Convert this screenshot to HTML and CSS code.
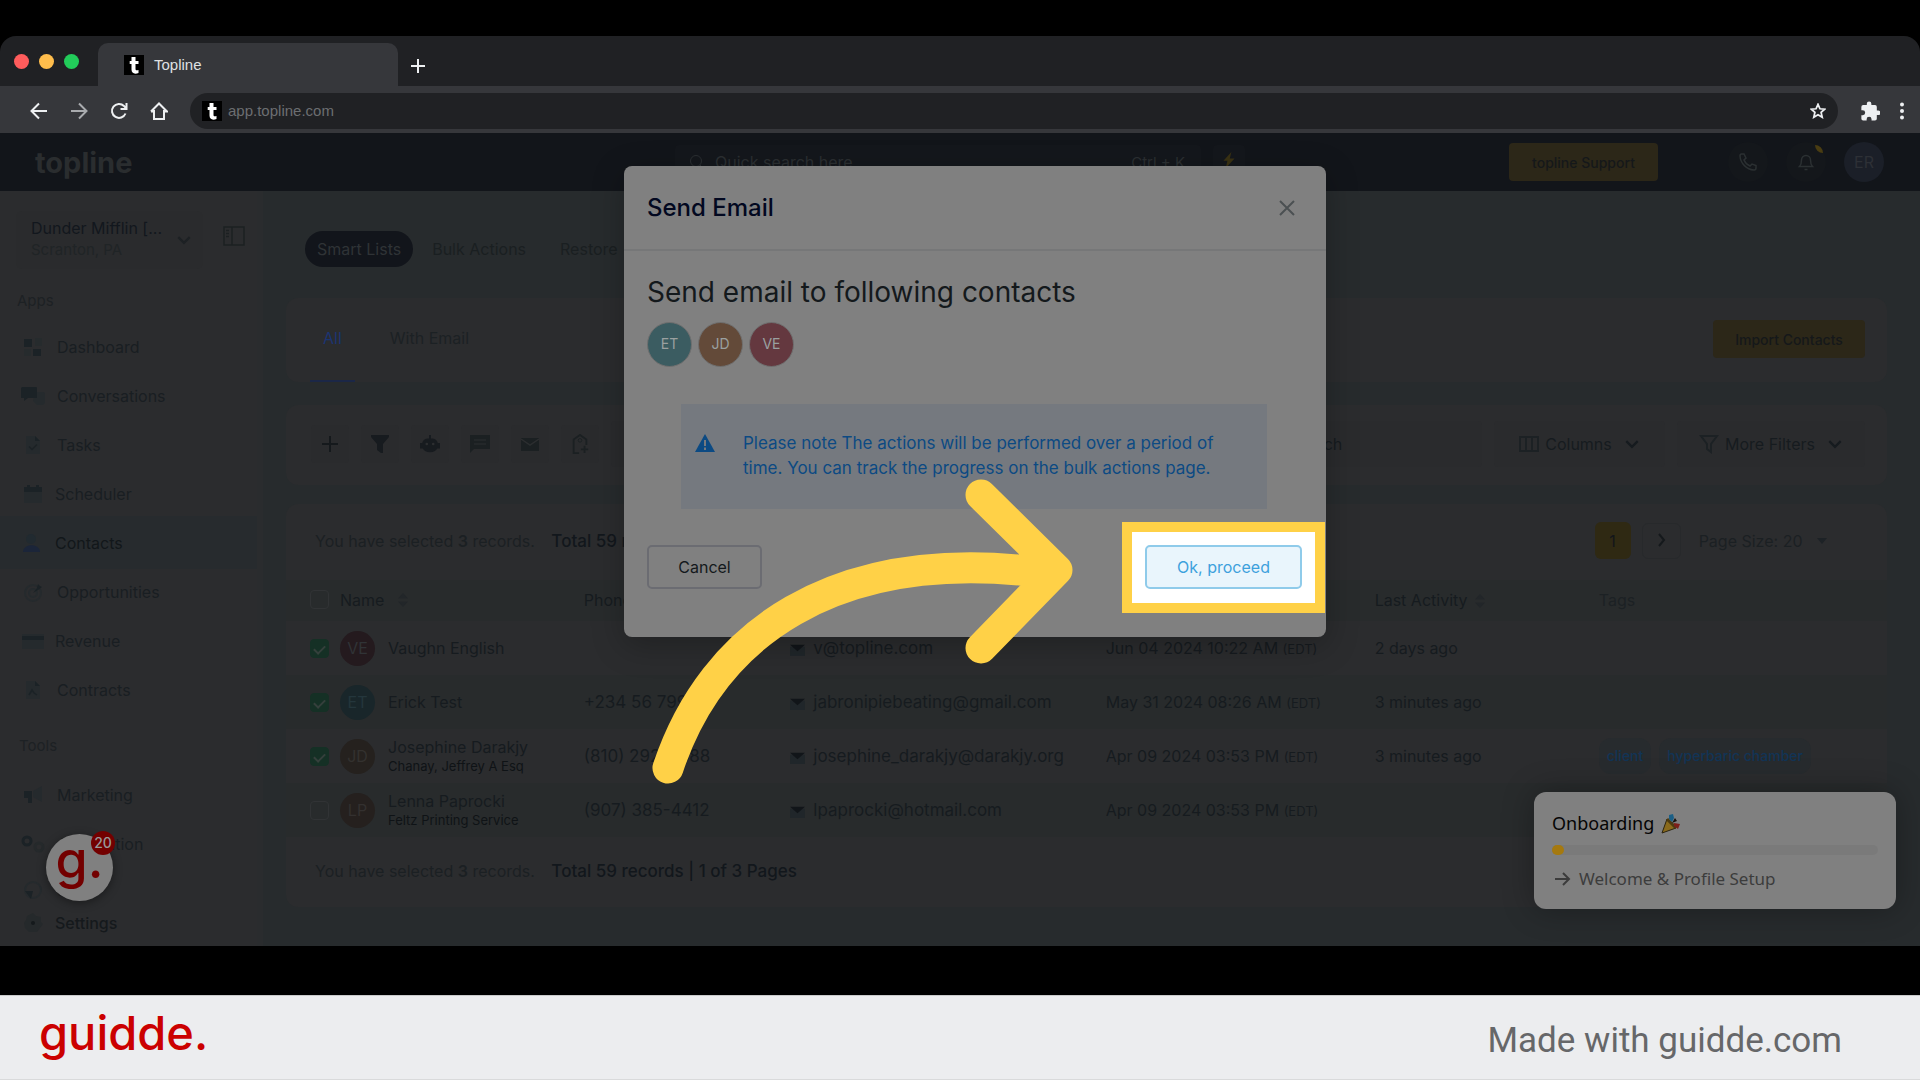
FILE: index.html
```html
<!DOCTYPE html>
<html lang="en">
<head>
  <meta charset="UTF-8">
  <meta name="viewport" content="width=device-width, initial-scale=1.0">
  <title>Topline</title>
  <link rel="stylesheet" href="styles.css">
</head>
<body>

  <!-- Shared icons -->
  <svg class="sprite" aria-hidden="true">
    <symbol id="i-sort" viewBox="0 0 12 16"><path d="M1 6.500 6 1l5 5.500zM1 9.500 6 15l5-5.500z" fill="currentColor"/></symbol>
    <symbol id="i-mail" viewBox="0 0 16 14"><path d="M0 4h16v10H0z" fill="#20262a"/><path d="M0 2h16L8 9z" fill="#111519"/></symbol>
    <symbol id="i-chevron" viewBox="0 0 14 14"><path d="M2 4.500l5 5 5-5" fill="none" stroke="currentColor" stroke-width="2"/></symbol>
    <symbol id="i-file" viewBox="0 0 20 20"><path d="M3 1h9l5 5v13H3z" fill="#252a2d"/><path d="M12 1l5 5h-5z" fill="#1b2226"/></symbol>
    <symbol id="i-favicon" viewBox="0 0 20 20"><path d="M0 0h20v20H0z" fill="#000"/><path d="M7.500 2h4v4h3v3h-3v5c0 1.400 1 1.700 3 1v3c-4 1.500-7 .3-7-3.400V9H5.700V6h1.800z" fill="#fff"/></symbol>
  </svg>

  <div class="browser">
    <div class="tab-strip">
      <div class="lights"><span class="light red"></span><span class="light amber"></span><span class="light green"></span></div>
      <div class="tab">
        <svg class="favicon"><use href="#i-favicon"/></svg>
        <span>Topline</span>
      </div>
      <button class="chrome-btn new-tab" aria-label="New tab"><svg viewBox="0 0 16 16"><path d="M8 1v14M1 8h14"/></svg></button>
    </div>

    <div class="address-row">
      <button class="chrome-btn" aria-label="Back"><svg viewBox="0 0 18 18"><path d="M17 9H2M9 1.500 1.500 9 9 16.500"/></svg></button>
      <button class="chrome-btn dim" aria-label="Forward"><svg viewBox="0 0 18 18"><path d="M1 9h15M9 1.500 16.500 9 9 16.500"/></svg></button>
      <button class="chrome-btn" aria-label="Reload"><svg viewBox="0 0 18 18"><path d="M15.500 11.500A7 7 0 1 1 14 4l2 2.500M16.500 1v6h-6"/></svg></button>
      <button class="chrome-btn" aria-label="Home"><svg viewBox="0 0 18 18"><path d="M4 8v9h10V8M1 9.500 9 1.500l8 8h-3M1 9.500h3"/></svg></button>
      <div class="address">
        <svg class="favicon"><use href="#i-favicon"/></svg>
        <input type="text" aria-label="Address" value="app.topline.com">
        <button class="chrome-btn small" aria-label="Bookmark"><svg viewBox="0 0 18 18"><path d="M9 1.500l2.200 5 5.300.5-4 3.600 1.200 5.400L9 13.200 4.300 16l1.200-5.400-4-3.600 5.300-.5z"/></svg></button>
      </div>
      <button class="chrome-btn puzzle" aria-label="Extensions"><svg viewBox="0 0 22 22"><path d="M20 10.500h-1.500v-4a2 2 0 0 0-2-2h-4V3a2.500 2.500 0 0 0-5 0v1.500h-4a2 2 0 0 0-2 2v3.800H3a2.700 2.700 0 0 1 0 5.400H1.500v3.800a2 2 0 0 0 2 2h3.800V20a2.700 2.700 0 0 1 5.400 0v1.500h3.800a2 2 0 0 0 2-2v-4H20a2.500 2.500 0 0 0 0-5z"/></svg></button>
      <button class="chrome-btn dots" aria-label="Menu"><svg viewBox="0 0 6 18"><circle cx="3" cy="2.500" r="2"/><circle cx="3" cy="9" r="2"/><circle cx="3" cy="15.500" r="2"/></svg></button>
    </div>

    <div class="app">
      <header class="topbar">
        <a class="brand" href="#">topline</a>
        <div class="quick">
          <svg viewBox="0 0 16 16" class="icon16"><circle cx="7" cy="7" r="5.500" fill="none" stroke="currentColor"/><path d="M11 11l4 4" stroke="currentColor"/></svg>
          <input type="text" aria-label="Quick search" placeholder="Quick search here">
          <span>Ctrl + K</span>
        </div>
        <button class="bolt" aria-label="Shortcuts"><svg viewBox="0 0 16 20" class="icon16"><path d="M11 0 1 11h5l-2 9 11-12H9z" fill="#3a3213"/></svg></button>
        <div class="top-actions">
          <button class="gold-btn support">topline Support</button>
          <button class="round" aria-label="Call"><svg viewBox="0 0 20 20" class="icon20"><path d="M6 2H3.500C2 2 2 3.500 2 4c.5 7.500 6.500 13.500 14 14 1 0 2-.5 2-2v-2.500l-4-1.500-2 2c-2.500-1-5-3.500-6-6l2-2z" fill="none" stroke="#2b3032" stroke-width="1.500"/></svg></button>
          <button class="round bell" aria-label="Notifications"><svg viewBox="0 0 20 20" class="icon20"><path d="M3.500 14.500c2-2 2-4 2-6.500a4.500 4.500 0 0 1 9 0c0 2.500 0 4.500 2 6.500zM8.500 17.500h3" fill="none" stroke="#2b3032" stroke-width="1.500"/></svg></button>
          <button class="round user">ER</button>
        </div>
      </header>

      <div class="body">
        <aside class="sidebar">
          <div class="account">
            <button class="account-box">
              <span class="account-text"><b>Dunder Mifflin [...</b><small>Scranton, PA</small></span>
              <svg class="icon16"><use href="#i-chevron"/></svg>
            </button>
            <button class="panel" aria-label="Collapse sidebar"><svg viewBox="0 0 22 20"><path d="M1 1h20v18H1zM9 1v18M3 4.500h3M3 7.500h3M3 10.500h3" fill="none" stroke="#1c2022" stroke-width="1.500"/></svg></button>
          </div>
          <h6>Apps</h6>
          <nav>
            <a href="#"><svg viewBox="0 0 20 20"><path d="M1 2h8v8H1zM10 12h8v7h-8z" fill="#1b2226"/><path d="M12 1h7v8h-7zM1 12h7v7H1z" fill="#262b2d"/></svg>Dashboard</a>
            <a href="#"><svg viewBox="0 0 24 20" class="wide"><path d="M14 6h8q2 0 2 2v9l-2 2h-6l-4-4z" fill="#252a2d"/><path d="M1 1h14q1 0 1 1v10H7l-4 3v-3H0V2z" fill="#1b2226"/></svg>Conversations</a>
            <a href="#"><svg viewBox="0 0 20 20"><use href="#i-file"/><path d="M6 11.500l3 3 5-5" fill="none" stroke="#1b2226" stroke-width="1.500"/></svg>Tasks</a>
            <a href="#" class="tight"><svg viewBox="0 0 20 20"><path d="M1 8h18v11H1z" fill="#252a2d"/><path d="M1 3h3V1h3v2h6V1h3v2h3v5H1z" fill="#1b2226"/></svg>Scheduler</a>
            <a href="#" class="tight active"><svg viewBox="0 0 20 20"><circle cx="8" cy="6" r="5" fill="#212a30"/><path d="M0 19c0-9 17-9 17 0z" fill="#1b2539"/></svg>Contacts</a>
            <a href="#"><svg viewBox="0 0 20 20"><circle cx="10" cy="11" r="8" fill="none" stroke="#252a2d" stroke-width="2"/><circle cx="10" cy="11" r="4" fill="none" stroke="#252a2d" stroke-width="2"/><path d="M10 11l4-5 1-4 2 2 2 1-4 3z" fill="#1b2226"/></svg>Opportunities</a>
            <a href="#" class="tight"><svg viewBox="0 0 22 20" class="wide"><path d="M0 3h22v15H0z" fill="#252a2d"/><path d="M0 5h22v4H0z" fill="#1b2226"/></svg>Revenue</a>
            <a href="#"><svg viewBox="0 0 20 20"><use href="#i-file"/><path d="M6 15l3-5 2 3 3 2" fill="none" stroke="#1b2226" stroke-width="1.500"/></svg>Contracts</a>
          </nav>
          <h6 class="tools">Tools</h6>
          <nav>
            <a href="#"><svg viewBox="0 0 20 20"><path d="M10 6l9-5v16l-9-5z" fill="#252a2d"/><path d="M1 6h8v12H5v-5H1z" fill="#1b2226"/></svg>Marketing</a>
            <a href="#"><svg viewBox="0 0 24 20" class="wide"><circle cx="6" cy="7" r="4" fill="none" stroke="#1b2226" stroke-width="3" /><circle cx="18" cy="13" r="4" fill="none" stroke="#25292b" stroke-width="3"/></svg>Automation</a>
            <a href="#" class="cut"><svg viewBox="0 0 20 20"><circle cx="10" cy="10" r="8" fill="none" stroke="#252a2d" stroke-width="2"/><path d="M2 11l8 0-2 8z" fill="#1b2226"/></svg>Sites</a>
          </nav>
          <a href="#" class="settings tight"><svg viewBox="0 0 20 20"><path d="M10 0l3 3 5 1 0 5 2 2-3 4-3 4-4 0-4 0-4-4-1-5 2-3 1-4z" fill="#25292b"/><circle cx="10" cy="10" r="2" fill="#15191c"/></svg>Settings</a>
        </aside>

        <main>
          <div class="pills">
            <a href="#" class="on">Smart Lists</a>
            <a href="#">Bulk Actions</a>
            <a href="#">Restore</a>
          </div>

          <section class="card lists">
            <a href="#" class="on">All</a>
            <a href="#">With Email</a>
            <button class="gold-btn">Import Contacts</button>
          </section>

          <section class="card tools-row">
            <button aria-label="Add"><svg viewBox="0 0 20 20"><path d="M10 2v16M2 10h16" stroke="#15191c" stroke-width="2"/></svg></button>
            <button aria-label="Pipeline"><svg viewBox="0 0 20 20"><path d="M1 1h18v2l-6 7v9h-2l-4-3v-6L1 3z" fill="#171b1f"/></svg></button>
            <button aria-label="Automation"><svg viewBox="0 0 22 20"><path d="M10 0h2v4c5 0 7 2 7.500 5H22v6h-3q-2 4-8 4t-8-4H0V9h2.500C3 6 5 4 10 4z" fill="#171b1f"/><circle cx="7.500" cy="10" r="1.500" fill="#2c2e30"/><circle cx="14.500" cy="10" r="1.500" fill="#2c2e30"/></svg></button>
            <button aria-label="Send SMS"><svg viewBox="0 0 20 20"><path d="M0 1h20v14H4l-4 4z" fill="#1b2022"/><path d="M4 6h12M4 10h12" stroke="#2c2e30"/></svg></button>
            <button aria-label="Send email"><svg viewBox="0 0 20 20"><path d="M1 4h18v13H1z" fill="#1b2022"/><path d="M1 5l9 6 9-6" fill="none" stroke="#2c2e30" stroke-width="1.500"/></svg></button>
            <button aria-label="Add tag"><svg viewBox="0 0 20 22"><path d="M9 21H3V6l7-5 7 5v6M15 13v8M11 17h8" fill="none" stroke="#1b2022" stroke-width="2"/><circle cx="10" cy="7" r="2" fill="none" stroke="#1b2022"/></svg></button>
            <input type="text" class="search" aria-label="Search contacts" placeholder="Quick search">
            <button class="wide-btn columns"><svg viewBox="0 0 20 16"><path d="M1 1h18v14H1zM7 1v14M13 1v14" fill="none" stroke="#1c2124" stroke-width="2"/></svg>Columns<svg><use href="#i-chevron"/></svg></button>
            <button class="wide-btn filters"><svg viewBox="0 0 20 18"><path d="M2 1h16l-6 8v8l-4-3V9z" fill="none" stroke="#1c2124" stroke-width="2"/></svg>More Filters<svg><use href="#i-chevron"/></svg></button>
          </section>

          <section class="card records">
            <div class="bar">
              <p>You have selected <b>3</b> records. <strong>Total 59 records | 1 of 3 Pages</strong></p>
              <div class="pager">
                <button class="page">1</button>
                <button class="next" aria-label="Next page"><svg viewBox="0 0 10 14"><path d="M3 1l5 6-5 6" fill="none" stroke="#15191c" stroke-width="2"/></svg></button>
                <button class="size">Page Size: 20 <svg viewBox="0 0 10 6"><path d="M0 0h10L5 6z" fill="#1d2226"/></svg></button>
              </div>
            </div>

            <table>
              <colgroup><col class="c-name"><col class="c-phone"><col class="c-email"><col class="c-date"><col class="c-last"><col></colgroup>
              <thead>
                <tr>
                  <th><div class="person"><input type="checkbox" aria-label="Select all"><span>Name</span><svg class="sort"><use href="#i-sort"/></svg></div></th>
                  <th>Phone</th>
                  <th>Email</th>
                  <th>Created</th>
                  <th>Last Activity <svg class="sort"><use href="#i-sort"/></svg></th>
                  <th class="faint">Tags</th>
                </tr>
              </thead>
              <tbody>
                <tr>
                  <td><div class="person"><input type="checkbox" aria-label="Select Vaughn English" checked><i class="ava ve">VE</i><span>Vaughn English</span></div></td>
                  <td></td>
                  <td><svg class="mail"><use href="#i-mail"/></svg>v@topline.com</td>
                  <td>Jun 04 2024 10:22 AM <small>(EDT)</small></td>
                  <td>2 days ago</td>
                  <td></td>
                </tr>
                <tr>
                  <td><div class="person"><input type="checkbox" aria-label="Select Erick Test" checked><i class="ava et">ET</i><span>Erick Test</span></div></td>
                  <td>+234 56 7999</td>
                  <td><svg class="mail"><use href="#i-mail"/></svg>jabronipiebeating@gmail.com</td>
                  <td>May 31 2024 08:26 AM <small>(EDT)</small></td>
                  <td>3 minutes ago</td>
                  <td></td>
                </tr>
                <tr>
                  <td><div class="person"><input type="checkbox" aria-label="Select Josephine Darakjy" checked><i class="ava jd">JD</i><span>Josephine Darakjy<em>Chanay, Jeffrey A Esq</em></span></div></td>
                  <td>(810) 292-9388</td>
                  <td><svg class="mail"><use href="#i-mail"/></svg>josephine_darakjy@darakjy.org</td>
                  <td>Apr 09 2024 03:53 PM <small>(EDT)</small></td>
                  <td>3 minutes ago</td>
                  <td><span class="tag">client</span><span class="tag">hyperbaric chamber</span></td>
                </tr>
                <tr>
                  <td><div class="person"><input type="checkbox" aria-label="Select Lenna Paprocki"><i class="ava lp">LP</i><span>Lenna Paprocki<em>Feltz Printing Service</em></span></div></td>
                  <td>(907) 385-4412</td>
                  <td><svg class="mail"><use href="#i-mail"/></svg>lpaprocki@hotmail.com</td>
                  <td>Apr 09 2024 03:53 PM <small>(EDT)</small></td>
                  <td></td>
                  <td></td>
                </tr>
              </tbody>
            </table>

            <div class="bar">
              <p>You have selected <b>3</b> records. <strong>Total 59 records | 1 of 3 Pages</strong></p>
            </div>
          </section>
        </main>
      </div>

      <!-- Onboarding widget -->
      <div class="onboarding">
        <h5>Onboarding <svg viewBox="0 0 20 20"><path d="M1 19 6 5l9 9z" fill="#8a6a1c" stroke="#2b2410"/><path d="M6 5l9 9" stroke="#4d3a10" stroke-width="3"/><path d="M8 1l4-1 1 4-2 4-3-3z" fill="#1b5f86"/><path d="M13 9l6 1-2 5-4-3z" fill="#7d1f1a"/><path d="M11 9l3-5 2 3z" fill="#17120e"/></svg></h5>
        <div class="progress"><span></span></div>
        <a href="#"><svg viewBox="0 0 16 14"><path d="M0 7h14M8 1l6 6-6 6" fill="none" stroke="currentColor" stroke-width="2"/></svg>Welcome &amp; Profile Setup</a>
      </div>

      <!-- Guidde bubble -->
      <button class="bubble">g.<span>20</span></button>

      <!-- Send email dialog -->
      <div class="modal" role="dialog" aria-labelledby="modal-title">
        <div class="modal-head">
          <h2 id="modal-title">Send Email</h2>
          <button class="close" aria-label="Close"><svg viewBox="0 0 16 16"><path d="M1 1l14 14M15 1 1 15" stroke="#4b5052" stroke-width="2"/></svg></button>
        </div>
        <div class="modal-body">
          <h3>Send email to following contacts</h3>
          <div class="people"><i class="et">ET</i><i class="jd">JD</i><i class="ve">VE</i></div>
          <div class="note">
            <svg viewBox="0 0 20 18"><path d="M10 0l10 18H0z" fill="#0c4a83"/><path d="M10 6v6M10 13.500v2.500" stroke="#75797f" stroke-width="2"/></svg>
            <p>Please note The actions will be performed over a period of time. You can track the progress on the bulk actions page.</p>
          </div>
        </div>
        <div class="modal-foot">
          <button class="cancel">Cancel</button>
          <div class="spotlight"><button class="ok">Ok, proceed</button></div>
        </div>
        <svg class="arrow" viewBox="0 0 430 320"><path d="M24 300C68 168 188 77 402 105M337 27l76 75-76 78" fill="none" stroke="#ffd147" stroke-width="31" stroke-linecap="round" stroke-linejoin="round"/></svg>
      </div>
    </div>
  </div>

  <footer>
    <a href="#" class="logo">guidde.</a>
    <span>Made with guidde.com</span>
  </footer>

</body>
</html>
```
FILE: styles.css
```css
* {
  margin: 0;
  padding: 0;
  box-sizing: border-box;
}

body {
  min-height: 100vh;
  display: flex;
  flex-direction: column;
  background: #000;
  font-family: Inter, "Liberation Sans", sans-serif;
  font-size: 16px;
  color: #161b1f;
  overflow-x: hidden;
}

button, input {
  font: inherit;
  color: inherit;
  background: none;
  border: 0;
}

a {
  color: inherit;
  text-decoration: none;
}

svg {
  flex: none;
}

.sprite {
  position: absolute;
  width: 0;
  height: 0;
}

.icon16 { width: 16px; height: 16px; }
.icon20 { width: 20px; height: 20px; }

/* Browser frame */
.browser {
  margin-top: 36px;
  font-size: 16px;
}

.tab-strip {
  height: 50px;
  display: flex;
  align-items: flex-end;
  background: #202124;
  border-radius: 16px 16px 0 0;
}

.lights {
  display: flex;
  gap: 10px;
  width: 98px;
  padding-left: 14px;
  align-self: center;
}

.light {
  width: 15px;
  height: 15px;
  border-radius: 50%;
}

.red { background: #ff5c5c; }
.amber { background: #ffbd4c; }
.green { background: #22cc5a; }

.tab {
  width: 300px;
  height: 43px;
  display: flex;
  align-items: center;
  gap: 10px;
  padding-left: 26px;
  background: #36373b;
  border-radius: 10px 10px 0 0;
  color: #dfe0e2;
  font: 15px "Liberation Sans", sans-serif;
}

.favicon {
  width: 20px;
  height: 20px;
}

.chrome-btn {
  width: 18px;
  height: 18px;
  display: flex;
}

.chrome-btn svg {
  width: 100%;
  height: 100%;
  fill: none;
  stroke: #eef0f2;
  stroke-width: 2;
}

.dim svg { stroke: #a9abae; }

.new-tab {
  width: 16px;
  height: 16px;
  margin: 0 0 12px 12px;
}

.address-row {
  height: 47px;
  display: flex;
  align-items: center;
  gap: 22px;
  padding: 2px 15px 0 30px;
  background: #36373b;
}

.address {
  flex: 1;
  height: 36px;
  display: flex;
  align-items: center;
  gap: 6px;
  padding: 0 12px;
  border-radius: 18px;
  background: #202124;
  color: #6c6e71;
  font: 15px "Liberation Sans", sans-serif;
}

.address input { flex: 1; }

.small { width: 16px; height: 16px; }

.puzzle {
  width: 20px;
  height: 20px;
  margin-right: -3px;
}

.dots { width: 6px; }

.puzzle svg, .dots svg {
  fill: #eef0f2;
  stroke: none;
}

/* App header */
.app {
  position: relative;
}

.topbar {
  height: 58px;
  display: flex;
  align-items: center;
  padding: 0 36px 0 35px;
  background: #12151a;
}

.brand {
  width: 640px;
  font-size: 29px;
  font-weight: 700;
  color: #2a2d2f;
}

.quick {
  width: 526px;
  height: 34px;
  display: flex;
  align-items: center;
  gap: 10px;
  padding: 0 16px 0 14px;
  border-radius: 4px;
  background: #14171c;
  color: #2b2f32;
}

.quick input { flex: 1; }

.quick span { font-size: 15px; }

::placeholder {
  color: inherit;
  opacity: 1;
}

.bolt {
  width: 32px;
  height: 34px;
  margin-left: 12px;
  border-radius: 4px;
  background: #14171c;
}

.top-actions {
  display: flex;
  align-items: center;
  gap: 18px;
  margin-left: auto;
}

.gold-btn {
  height: 38px;
  width: 152px;
  border-radius: 4px;
  background: #2c2718;
  color: #15181a;
  font-size: 14px;
  font-weight: 500;
}

.support {
  width: 149px;
  margin-right: 52px;
}

.round {
  width: 40px;
  height: 40px;
  display: flex;
  align-items: center;
  justify-content: center;
  border-radius: 50%;
  background: #14171b;
}

.bell { position: relative; }

.bell::after {
  content: "";
  position: absolute;
  top: 3px;
  right: 3px;
  width: 8px;
  height: 8px;
  border-radius: 0 8px 0 8px;
  background: #4a3d12;
}

.user {
  background: #1b1f28;
  color: #2d3036;
}

/* Sidebar */
.body {
  display: flex;
  background: #272b2d;
}

.sidebar {
  flex: none;
  width: 263px;
  display: flex;
  flex-direction: column;
  background: #2b2c2e;
  border-right: 6px solid #2a2c2e;
}

.account {
  display: flex;
  align-items: center;
  gap: 20px;
  padding: 20px 0 0 16px;
}

.account-box {
  width: 187px;
  height: 58px;
  display: flex;
  align-items: center;
  justify-content: space-between;
  padding: 0 11px 0 15px;
  border-radius: 6px;
  background: #2a2b2d;
  text-align: left;
}

.account-box svg { color: #1d2124; }

.account-text {
  padding-bottom: 2px;
}

.account-text b {
  display: block;
  font-weight: 400;
  line-height: 21px;
  color: #12171d;
}

.account-text small {
  display: block;
  font-size: 15px;
  line-height: 21px;
  color: #202426;
}

.panel svg {
  display: block;
  width: 22px;
  height: 20px;
  margin-bottom: 8px;
}

h6 {
  height: 24px;
  margin: 20px 0 9px 17px;
  font-size: 15px;
  font-weight: 400;
  line-height: 24px;
  color: #1d2124;
}

h6.tools { margin: 20px 0 12px 19px; }

nav a, .settings {
  height: 49px;
  display: flex;
  align-items: center;
  gap: 14px;
  padding-left: 23px;
}

nav a { color: #191e22; }

nav svg, .settings svg {
  width: 20px;
  height: 20px;
}

nav svg.wide {
  width: 24px;
  margin: 0 -2px;
}

nav .tight, .settings { gap: 12px; }

nav .active {
  background: #272b2e;
  box-shadow: 0 -2px #272b2e, 0 2px #272b2e;
  color: #12171a;
}

nav .cut {
  height: 32px;
  align-items: flex-end;
}

.settings {
  height: 46px;
  font-weight: 500;
  color: #15191c;
}

/* Main */
main {
  flex: 1;
  min-width: 0;
  padding: 40px 33px 36px 23px;
}

.pills {
  display: flex;
  gap: 7px;
  margin: 0 0 31px 19px;
}

.pills a {
  height: 36px;
  padding: 0 12px;
  border-radius: 18px;
  line-height: 36px;
  color: #1a1f21;
}

.pills a:last-child { padding-left: 15px; }

.pills .on {
  background: #12151b;
  color: #2f3336;
}

.card {
  background: #2b2c2e;
  border-radius: 12px;
}

.lists {
  height: 84px;
  display: flex;
  gap: 22px;
  padding: 0 22px 0 24px;
  margin-bottom: 23px;
}

.lists a {
  padding: 0 13px;
  line-height: 80px;
  color: #1c2124;
}

.lists .on {
  border-bottom: 2px solid #1b2747;
  color: #1b3472;
}

.lists button {
  margin: 22px 0 0 auto;
}

.tools-row {
  height: 80px;
  display: flex;
  align-items: center;
  gap: 12px;
  padding: 0 22px 2px 25px;
  margin-bottom: 19px;
}

.tools-row button {
  width: 38px;
  height: 38px;
  display: flex;
  align-items: center;
  justify-content: center;
  border-radius: 4px;
  background: #2a2b2d;
}

.tools-row button svg {
  width: 20px;
  height: 20px;
}

.tools-row .search {
  flex: 1;
  min-width: 0;
  height: 46px;
  padding-left: 632px;
  border-radius: 4px;
  background: #2a2b2d;
}

.tools-row .wide-btn {
  width: 171px;
  height: 46px;
  gap: 6px;
}

.tools-row .filters { width: 188px; }

.tools-row .wide-btn svg:last-child {
  width: 16px;
  margin-left: 6px;
}

/* Records */
.bar {
  height: 76px;
  display: flex;
  align-items: center;
  justify-content: space-between;
  padding: 0 32px 3px 29px;
  color: #1b2023;
}

.bar b { font-weight: 600; }

.bar strong {
  margin-left: 12px;
  font-size: 17px;
  font-weight: 500;
  color: #12171c;
}

.bar:last-child { height: 70px; }

.pager {
  display: flex;
  align-items: center;
  gap: 11px;
}

.pager .page {
  width: 36px;
  height: 37px;
  border-radius: 6px;
  background: #2f2913;
  color: #12151a;
}

.pager .next {
  width: 39px;
  height: 36px;
  border: 1px solid #27292b;
  border-radius: 6px;
}

.next svg { width: 10px; height: 14px; }

.pager .size {
  padding: 0 28px 0 7px;
}

.size svg {
  width: 10px;
  height: 6px;
  margin: 0 0 3px 10px;
}

table {
  width: 100%;
  table-layout: fixed;
  border-collapse: collapse;
}

.c-name { width: 18.6%; }
.c-phone { width: 12.9%; }
.c-email { width: 19.7%; }
.c-date { width: 16.8%; }
.c-last { width: 14%; }

th {
  height: 41px;
  padding-bottom: 2px;
  text-align: left;
  font-weight: 400;
}

.faint { color: #1c2124; }

td {
  height: 54px;
  white-space: nowrap;
}

td:nth-child(2), td:nth-child(3) { font-size: 17px; }

thead, tbody tr:nth-child(even) {
  background: #282b2c;
}

td small { font-size: 13px; }

.person {
  display: flex;
  align-items: center;
  gap: 11px;
  padding-left: 24px;
}

.person span {
  line-height: 20px;
}

.person .ava + span { margin-left: 2px; }

.person em {
  display: block;
  font-size: 13px;
  font-style: normal;
  font-weight: 400;
  line-height: 18px;
  color: #0f1316;
}

input[type="checkbox"] {
  appearance: none;
  width: 19px;
  height: 19px;
  border: 1px solid #313335;
  border-radius: 4px;
}

input[type="checkbox"]:checked {
  display: grid;
  place-items: center;
  border-color: #153025;
  background: #153025;
}

input[type="checkbox"]:checked::after {
  content: "";
  width: 9px;
  height: 5px;
  border: solid #35403c;
  border-width: 0 0 2px 2px;
  transform: rotate(-45deg);
}

.sort {
  width: 12px;
  height: 16px;
  margin-left: 2px;
  vertical-align: middle;
  color: #222629;
}

.ava {
  width: 35px;
  height: 35px;
  border-radius: 50%;
  font-style: normal;
  line-height: 35px;
  text-align: center;
}

.ava.ve { background: #241a1e; color: #303336; }
.ava.et { background: #19262a; color: #24363c; }
.ava.jd { background: #25211e; color: #33312f; }
.ava.lp { background: #25201e; color: #33302f; }

.mail {
  width: 15px;
  height: 13px;
  margin-right: 8px;
  vertical-align: -2px;
}

.tag {
  display: inline-block;
  height: 36px;
  margin-right: 8px;
  padding: 0 8px;
  border-radius: 12px;
  background: #272b2e;
  font-size: 14px;
  font-weight: 500;
  line-height: 36px;
  color: #123456;
}

/* Onboarding */
.onboarding {
  position: absolute;
  right: 24px;
  bottom: 37px;
  width: 362px;
  padding: 18px;
  border-radius: 12px;
  background: #808080;
  box-shadow: 0 0 32px rgba(0, 0, 0, 0.3);
  font-family: "Noto Sans", sans-serif;
  color: #3c3c3c;
}

.onboarding h5 {
  font-size: 18px;
  font-weight: 400;
  line-height: 26px;
  color: #050505;
}

.onboarding h5 svg {
  width: 20px;
  height: 20px;
  margin-left: 2px;
  vertical-align: -4px;
}

.progress {
  height: 10px;
  margin: 9px 0 12px;
  border-radius: 5px;
  background: #7a7a7a;
}

.progress span {
  display: block;
  width: 12px;
  height: 10px;
  border-radius: 5px;
  background: #a5790f;
}

.onboarding a {
  display: flex;
  align-items: center;
  gap: 8px;
  padding-left: 3px;
  font-size: 17px;
  line-height: 24px;
}

.onboarding a svg {
  width: 16px;
  height: 14px;
}

/* Guidde bubble */
.bubble {
  position: absolute;
  left: 46px;
  bottom: 45px;
  width: 67px;
  height: 67px;
  padding-bottom: 15px;
  border-radius: 50%;
  background: #808080;
  box-shadow: 0 2px 10px rgba(0, 0, 0, 0.4);
  color: #730000;
  font-size: 52px;
  font-weight: 500;
  line-height: 52px;
}

.bubble span {
  position: absolute;
  top: -3px;
  right: -2px;
  width: 24px;
  height: 24px;
  border-radius: 50%;
  background: #730000;
  color: #999;
  font-size: 14px;
  line-height: 24px;
}

/* Modal */
.modal {
  position: absolute;
  top: 33px;
  left: 32.5%;
  width: 702px;
  border-radius: 8px;
  background: #808080;
  box-shadow: 0 8px 32px rgba(0, 0, 0, 0.25);
  color: #14191c;
}

.modal-head {
  height: 85px;
  display: flex;
  align-items: center;
  justify-content: space-between;
  padding: 0 31px 0 23px;
  border-bottom: 2px solid #767778;
}

.modal-head h2 {
  font-size: 24px;
  font-weight: 500;
  color: #020820;
}

.close svg {
  display: block;
  width: 16px;
  height: 16px;
}

.modal-body {
  padding: 24px 23px 36px;
}

.modal-body h3 {
  font-size: 28px;
  font-weight: 400;
  line-height: 34px;
}

.people {
  display: flex;
  gap: 6px;
  margin: 13px 0 37px;
}

.people i {
  width: 45px;
  height: 45px;
  border: 1px solid #6f6f6f;
  border-radius: 50%;
  font-size: 14px;
  font-style: normal;
  line-height: 42px;
  text-align: center;
  color: #9aa0a0;
}

.people .et { background: #3b5c61; }
.people .jd { background: #634a39; }
.people .ve { background: #64383f; }

.note {
  display: flex;
  align-items: flex-start;
  gap: 28px;
  margin: 0 36px 0 34px;
  padding: 27px 30px 28px 14px;
  background: #75797f;
  color: #0c4a83;
  font-size: 17px;
  line-height: 25px;
}

.note svg {
  width: 20px;
  height: 18px;
  margin-top: 3px;
}

.modal-foot {
  display: flex;
  justify-content: space-between;
  padding: 0 24px 48px 23px;
}

.modal-foot button {
  height: 44px;
  border-radius: 5px;
}

.cancel {
  width: 115px;
  border: 2px solid #6b6c72;
}

.spotlight {
  position: relative;
  z-index: 0;
}

.spotlight::before {
  content: "";
  position: absolute;
  z-index: -1;
  inset: -23px -23px -24px;
  border: 10px solid #ffd147;
  background: #fff;
}

.ok {
  width: 157px;
  border: 2px solid #8fcbea;
  background: #e9f5fc;
  color: #3da1dc;
}

.arrow {
  position: absolute;
  top: 302px;
  left: 20px;
  width: 430px;
  height: 320px;
}

/* Footer */
footer {
  height: 85px;
  display: flex;
  align-items: center;
  justify-content: space-between;
  margin-top: auto;
  padding: 6px 78px 0 39px;
  background: #ecedef;
  border-top: 1px solid #c9cacb;
  border-bottom: 1px solid #d9dadb;
  color: #666769;
  font-family: Roboto, sans-serif;
  font-size: 35px;
}

.logo {
  padding-bottom: 16px;
  color: #cb0000;
  font-family: Inter, sans-serif;
  font-size: 47px;
  font-weight: 500;
}
```
